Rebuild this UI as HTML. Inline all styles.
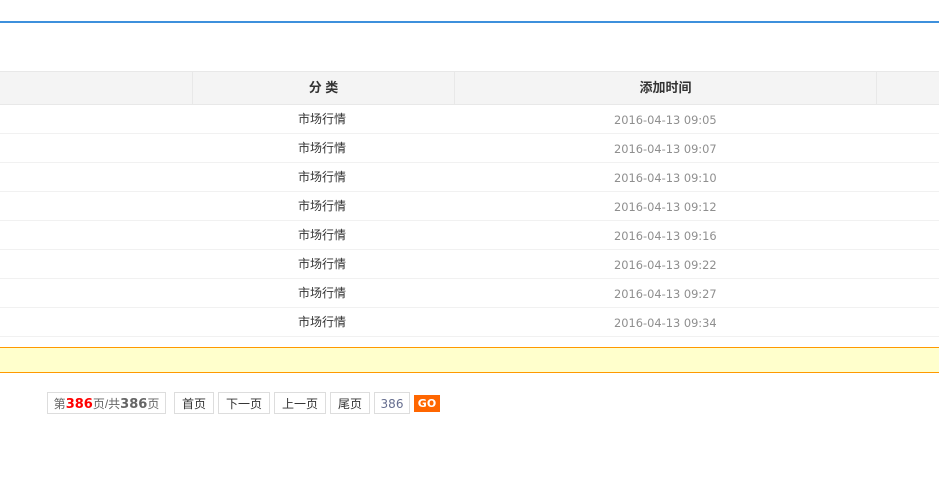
<!DOCTYPE html>
<html><head><meta charset="utf-8"><style>
html,body{margin:0;padding:0;background:#fff;width:939px;height:495px;overflow:hidden}
body{position:relative;font-family:"Liberation Sans","WenQuanYi Zen Hei","Noto Sans CJK SC",sans-serif;font-size:12px;color:#333}
div{position:absolute;box-sizing:border-box}
.c{text-align:center;white-space:nowrap}
.r{left:0;width:939px;height:1px;background:#f1f1f1}
.s{top:72px;width:1px;height:32px;background:#e8e8e8}
.d{left:614px;width:103px;font-family:"DejaVu Sans",sans-serif;font-size:11.4px;color:#8f8f8f;line-height:16px;white-space:nowrap}
.t{left:298px;width:48px;font-size:12px;line-height:16px;color:#333;white-space:nowrap}
.b{top:392px;height:22px;border:1px solid #ddd;line-height:22px;text-align:center;white-space:nowrap;color:#333;font-size:12px}
.n{font-family:"DejaVu Sans",sans-serif;font-size:13px;font-weight:bold;line-height:20px}
</style></head><body>
<div style="left:0;top:21px;width:939px;height:2px;background:#3e90dc"></div>
<div style="left:0;top:71px;width:939px;height:34px;background:#f4f4f4;border-top:1px solid #e8e8e8;border-bottom:1px solid #e8e8e8"></div>
<div class="s" style="left:192px"></div><div class="s" style="left:454px"></div><div class="s" style="left:876px"></div>
<div class="c" style="left:193px;width:261px;top:80px;line-height:16px;font-size:13px;font-weight:bold;color:#333">分 类</div>
<div class="c" style="left:455px;width:421px;top:80px;line-height:16px;font-size:13px;font-weight:bold;color:#333">添加时间</div>

<div class="t" style="top:111px">市场行情</div><div class="d" style="top:112px">2016-04-13 09:05</div><div class="r" style="top:133px"></div>
<div class="t" style="top:140px">市场行情</div><div class="d" style="top:141px">2016-04-13 09:07</div><div class="r" style="top:162px"></div>
<div class="t" style="top:169px">市场行情</div><div class="d" style="top:170px">2016-04-13 09:10</div><div class="r" style="top:191px"></div>
<div class="t" style="top:198px">市场行情</div><div class="d" style="top:199px">2016-04-13 09:12</div><div class="r" style="top:220px"></div>
<div class="t" style="top:227px">市场行情</div><div class="d" style="top:228px">2016-04-13 09:16</div><div class="r" style="top:249px"></div>
<div class="t" style="top:256px">市场行情</div><div class="d" style="top:257px">2016-04-13 09:22</div><div class="r" style="top:278px"></div>
<div class="t" style="top:285px">市场行情</div><div class="d" style="top:286px">2016-04-13 09:27</div><div class="r" style="top:307px"></div>
<div class="t" style="top:314px">市场行情</div><div class="d" style="top:315px">2016-04-13 09:34</div><div class="r" style="top:336px"></div>

<div style="left:0;top:347px;width:939px;height:26px;background:#ffffcc;border-top:1px solid #f90;border-bottom:1px solid #f90"></div>

<div class="b" style="left:47px;width:119px;color:#666">第<span class="n" style="color:#f00">386</span>页/共<span class="n" style="color:#666">386</span>页</div>
<div class="b" style="left:174px;width:40px">首页</div>
<div class="b" style="left:218px;width:52px">下一页</div>
<div class="b" style="left:274px;width:52px">上一页</div>
<div class="b" style="left:330px;width:40px">尾页</div>
<div class="b" style="left:374px;width:36px;font-family:'DejaVu Sans',sans-serif;font-size:12px;color:#666e8f">386</div>
<div style="left:414px;top:395px;width:26px;height:17px;background:#f60;color:#fff;font-family:'DejaVu Sans',sans-serif;font-weight:bold;font-size:11px;line-height:18px;text-align:center">GO</div>
</body></html>
